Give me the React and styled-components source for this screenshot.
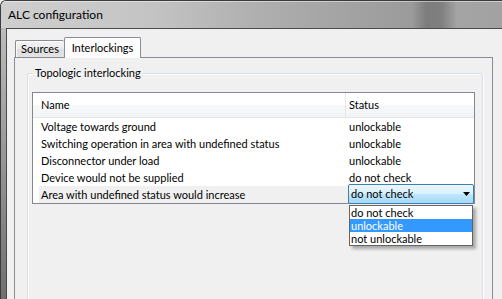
import React from 'react';
import styled, { createGlobalStyle } from 'styled-components';

const Global = createGlobalStyle`
  html, body {
    margin: 0;
    overflow: hidden;
    background: #f0f0f0;
  }
  body {
    font-family: 'Lato', sans-serif;
    font-size: 11px;
    color: #000;
  }
`;

const Window = styled.div`
  height: 100vh;
  overflow: hidden;
  box-sizing: border-box;
  display: flex;
  flex-direction: column;
  border-top: 1px solid #3c3c3c;
  border-left: 1px solid #3c3c3c;
  border-top-left-radius: 6px;
  background: linear-gradient(180deg, #c4c4c4 0, #a9a9a9 90px, #8a8a8a 200px, #6f6f6f 300px);
`;

const TitleBar = styled.div`
  flex: none;
  height: 27px;
  line-height: 27px;
  padding-left: 7px;
  font-size: 12px;
  border-top-left-radius: 5px;
  background: linear-gradient(
    90deg,
    #cfcfcf 0%,
    #c4c4c4 30%,
    #b0b0b0 50%,
    #a2a2a2 70%,
    #9b9b9b 82%,
    #7c7c7c 85%,
    #808080 88%,
    #a4a4a4 91%,
    #a2a2a2 100%
  );
  box-shadow: inset 0 1px 0 rgba(255, 255, 255, 0.45);
`;

/* the dialog runs on past the bottom of the shot, so its lower edge is pushed out of view */
const Client = styled.div`
  flex: none;
  height: 320px;
  margin-left: 5px;
  border-top: 1px solid #4a4a4a;
  border-left: 1px solid #4a4a4a;
  background: #f0f0f0;
  padding: 8px 9px 0 7px;
  display: flex;
  flex-direction: column;
`;

const TabStrip = styled.div`
  display: flex;
  align-items: flex-end;
  height: 20px;
  padding-left: 1px;
  position: relative;
  z-index: 1;
`;

const Tab = styled.div`
  box-sizing: border-box;
  width: ${(p) => p.$width}px;
  height: ${(p) => (p.$active ? 21 : 17)}px;
  margin-bottom: ${(p) => (p.$active ? -1 : 0)}px;
  line-height: ${(p) => (p.$active ? 19 : 15)}px;
  text-align: center;
  border: 1px solid #898c95;
  border-bottom: none;
  border-right: ${(p) => (p.$last ? '1px solid #898c95' : 'none')};
  border-radius: 2px 2px 0 0;
  background: ${(p) =>
    p.$active
      ? '#fcfcfc'
      : 'linear-gradient(180deg, #f3f3f3 0%, #ebebeb 50%, #dedede 51%, #e3e3e3 100%)'};
  box-shadow: ${(p) => (p.$active ? 'none' : 'inset 1px 1px 0 #fff')};
`;

const TabPage = styled.div`
  flex: 1;
  border: 1px solid #898c95;
  background: #f0f0f0;
  padding: 8px 9px 0 12px;
  display: flex;
  flex-direction: column;
`;

const Group = styled.fieldset`
  flex: 1;
  min-width: 0;
  margin: 0;
  padding: 12px 7px 0 0;
  border: 1px solid #d5dfe5;
  border-radius: 3px;
  box-shadow: inset 1px 1px 0 #fff, 1px 1px 0 #fff;
  display: flex;
  flex-direction: column;
`;

const Caption = styled.legend`
  margin-left: 5px;
  padding: 0 2px;
  line-height: 14px;
`;

const ListView = styled.div`
  flex: 1;
  margin-left: 4px;
  border: 1px solid #828790;
  background: #fff;
`;

const Header = styled.div`
  display: grid;
  grid-template-columns: 312px 1fr;
  height: 24px;
  line-height: 24px;
  border-bottom: 1px solid #e5e5e5;
  background: linear-gradient(180deg, #ffffff 0%, #ffffff 50%, #f7f8fa 51%, #f3f4f6 100%);
`;

const HeaderCell = styled.div`
  padding-left: ${(p) => (p.$first ? 8 : 3)}px;
  border-left: ${(p) => (p.$first ? 'none' : '1px solid #e5e5e5')};
`;

const Row = styled.div`
  display: grid;
  grid-template-columns: 306px 1fr;
  height: 17px;
  line-height: 17px;
  margin-left: 6px;
  background: ${(p) => (p.$selected ? '#f0f0f0' : 'transparent')};
`;

const NameCell = styled.div`
  padding-left: 2px;
  white-space: nowrap;
`;

const StatusCell = styled.div`
  position: relative;
  padding-left: 4px;
`;

const Combo = styled.div`
  position: absolute;
  top: -2px;
  left: 3px;
  right: 0;
  height: 20px;
  box-sizing: border-box;
  border: 1px solid #3c7fb1;
  border-radius: 2px;
  background: linear-gradient(180deg, #eaf6fd 0%, #d9f0fc 50%, #bee6fd 51%, #a7d9f5 100%);
  display: flex;
  align-items: center;
  justify-content: space-between;
  padding: 0 3px 0 2px;
  line-height: 18px;
`;

const DropList = styled.div`
  position: absolute;
  top: 20px;
  left: 0;
  right: 0;
  border: 1px solid #646464;
  background: #fff;
  box-shadow: 3px 3px 3px rgba(0, 0, 0, 0.3);
`;

const Option = styled.div`
  height: 13px;
  line-height: 13px;
  padding-left: 1px;
  color: ${(p) => (p.$hot ? '#fff' : '#000')};
  background: ${(p) => (p.$hot ? '#3399ff' : '#fff')};
`;

const rows = [
  ['Voltage towards ground', 'unlockable'],
  ['Switching operation in area with undefined status', 'unlockable'],
  ['Disconnector under load', 'unlockable'],
  ['Device would not be supplied', 'do not check'],
];

const options = ['do not check', 'unlockable', 'not unlockable'];

function Arrow() {
  return (
    <svg width="7" height="4" viewBox="0 0 7 4">
      <polygon points="0,0 7,0 3.5,4" fill="#000" />
    </svg>
  );
}

export default function App() {
  return (
    <>
      <Global />
      <Window>
        <TitleBar>ALC configuration</TitleBar>
        <Client>
          <TabStrip>
            <Tab $width={49}>Sources</Tab>
            <Tab $width={77} $active $last>
              Interlockings
            </Tab>
          </TabStrip>
          <TabPage>
            <Group>
              <Caption>Topologic interlocking</Caption>
              <ListView>
                <Header>
                  <HeaderCell $first>Name</HeaderCell>
                  <HeaderCell>Status</HeaderCell>
                </Header>
                {rows.map(([name, status]) => (
                  <Row key={name}>
                    <NameCell>{name}</NameCell>
                    <StatusCell>{status}</StatusCell>
                  </Row>
                ))}
                <Row $selected>
                  <NameCell>Area with undefined status would increase</NameCell>
                  <StatusCell>
                    <Combo>
                      <span>do not check</span>
                      <Arrow />
                      <DropList>
                        {options.map((o) => (
                          <Option key={o} $hot={o === 'unlockable'}>
                            {o}
                          </Option>
                        ))}
                      </DropList>
                    </Combo>
                  </StatusCell>
                </Row>
              </ListView>
            </Group>
          </TabPage>
        </Client>
      </Window>
    </>
  );
}
